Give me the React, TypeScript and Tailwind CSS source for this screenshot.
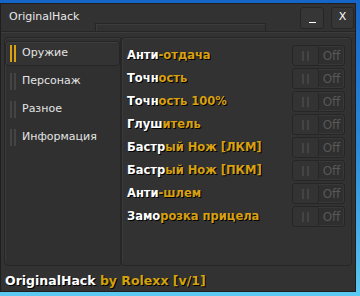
import React from 'react'

const tabs = ['Оружие', 'Персонаж', 'Разное', 'Информация']

const features: [string, string][] = [
  ['Анти', '-отдача'],
  ['Точн', 'ость'],
  ['Точн', 'ость 100%'],
  ['Глуш', 'итель'],
  ['Бастр', 'ый Нож [ЛКМ]'],
  ['Бастр', 'ый Нож [ПКМ]'],
  ['Анти', '-шлем'],
  ['Замо', 'розка прицела'],
]

const Toggle = () => (
  <div className="flex h-[21px] w-[53px] rounded-[3px] border border-[#262626] bg-[#2f2f2f] shadow-[inset_0_0_0_1px_#383838]">
    <div className="flex w-[26px] items-center justify-center gap-[3px] rounded-[3px] border-r border-[#262626] bg-[#333]">
      <span className="h-[10px] w-[2px] bg-[#444]" />
      <span className="h-[10px] w-[2px] bg-[#444]" />
    </div>
    <div className="flex flex-1 items-center justify-center text-[12px] text-[#585858]">Off</div>
  </div>
)

export default function App() {
  return (
    <div className="h-[296px] w-[360px] bg-gradient-to-b from-[#1565c8] via-[#2a8ad8] to-[#5ccaf2] pt-[3px]" style={{ fontFamily: '"DejaVu Sans", Verdana, sans-serif' }}>
      <div className="flex h-[289px] w-[356px] flex-col border border-[#1e1e1e] bg-[#323232]">
        {/* title bar */}
        <div className="relative flex h-[28px] items-center border-b border-[#262626] shadow-[0_1px_0_#3c3c3c]">
          <span className="ml-[8px] text-[11px] text-[#e8e8e8]">OriginalHack</span>
          <div className="absolute bottom-0 left-[94px] h-[8px] w-[171px] border border-b-0 border-[#262626] shadow-[inset_1px_1px_0_#3c3c3c]" />
          <div className="ml-auto mr-[1px] flex gap-[7px]">
            <div className="flex h-[22px] w-[24px] items-end justify-center rounded-[3px] border border-[#262626] bg-[#363636] pb-[5px] text-[12px] leading-none text-white">
              <span className="h-[1px] w-[7px] bg-white" />
            </div>
            <div className="flex h-[22px] w-[23px] items-center justify-center rounded-[3px] border border-[#262626] bg-[#363636] text-[11px] text-white">X</div>
          </div>
        </div>

        {/* panels */}
        <div className="mt-[5px] flex px-[3px]">
          <div className="h-[229px] w-[117px] rounded-l-[4px] border border-[#262626] bg-[#303030] pt-[3px] shadow-[inset_1px_1px_0_#3a3a3a]">
            {tabs.map((t, i) => (
              <div
                key={t}
                className={`flex h-[25px] items-center gap-[6px] pl-[4px] ${i === 0 ? 'mb-[3px] rounded-[3px] border border-[#262626] bg-[#333] shadow-[inset_1px_1px_0_#3d3d3d]' : 'mb-[3px] border border-transparent'}`}
              >
                <div className="flex gap-[2px]">
                  <span className={`h-[17px] w-[2px] ${i === 0 ? 'bg-[#d9a011]' : 'bg-[#444]'}`} />
                  <span className={`h-[17px] w-[2px] ${i === 0 ? 'bg-[#d9a011]' : 'bg-[#444]'}`} />
                </div>
                <span className="text-[11px] text-[#e4e4e4]">{t}</span>
              </div>
            ))}
          </div>
          <div className="h-[229px] flex-1 rounded-[4px] border border-[#262626] bg-[#323232] pl-[5px] pr-[6px] pt-[6px] shadow-[inset_1px_1px_0_#3a3a3a]">
            {features.map(([a, b]) => (
              <div key={a + b} className="flex h-[23px] items-center justify-between">
                <span className="text-[11.5px] font-bold [text-shadow:1px_1px_0_#000]">
                  <span className="text-white">{a}</span>
                  <span className="text-[#d9a011]">{b}</span>
                </span>
                <Toggle />
              </div>
            ))}
          </div>
        </div>

        {/* footer */}
        <div className="mt-[6px] pl-[4px] text-[12.5px] font-bold [text-shadow:1px_1px_0_#000]">
          <span className="text-white">OriginalHack</span>
          <span className="text-[#d4a20c]"> by Rolexx [v/1]</span>
        </div>
      </div>
    </div>
  )
}
